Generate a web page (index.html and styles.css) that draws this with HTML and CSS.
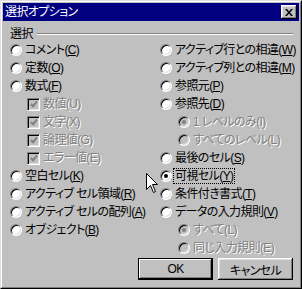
FILE: index.html
```html
<!DOCTYPE html>
<html lang="ja">
  <head>
    <meta charset="UTF-8" />
    <title>選択オプション</title>
    <link rel="stylesheet" href="styles.css">
  </head>
  <body>
    <div class="window">
      <div class="frame">
        <!-- Title bar -->
        <div class="titlebar">
          <span class="title">選択オプション</span>
          <button class="close">
            <svg width="8" height="7" viewBox="0 0 8 7">
              <path d="M0 0h2l2 2.5L6 0h2L5 3.5 8 7H6L4 4.5 2 7H0l3-3.5z" fill="#000" />
            </svg>
          </button>
        </div>

        <!-- Dialog body -->
        <div class="content">
          <div class="group-head">
            <span class="group-label">選択</span>
            <span class="rule"></span>
          </div>

          <div class="options">
            <div class="col">
              <div class="row"><span class="radio"></span><span class="label">コメント(<u>C</u>)</span></div>
              <div class="row"><span class="radio"></span><span class="label">定数(<u>O</u>)</span></div>
              <div class="row"><span class="radio"></span><span class="label">数式(<u>F</u>)</span></div>
              <div class="row sub"><span class="check"></span><span class="label off">数値(U)</span></div>
              <div class="row sub"><span class="check"></span><span class="label off">文字(X)</span></div>
              <div class="row sub"><span class="check"></span><span class="label off">論理値(G)</span></div>
              <div class="row sub"><span class="check"></span><span class="label off">エラー値(E)</span></div>
              <div class="row"><span class="radio"></span><span class="label">空白セル(<u>K</u>)</span></div>
              <div class="row"><span class="radio"></span><span class="label">アクティブ セル領域(<u>R</u>)</span></div>
              <div class="row"><span class="radio"></span><span class="label">アクティブ セルの配列(<u>A</u>)</span></div>
              <div class="row"><span class="radio"></span><span class="label">オブジェクト(<u>B</u>)</span></div>
            </div>
            <div class="col">
              <div class="row"><span class="radio"></span><span class="label">アクティブ行との相違(<u>W</u>)</span></div>
              <div class="row"><span class="radio"></span><span class="label">アクティブ列との相違(<u>M</u>)</span></div>
              <div class="row"><span class="radio"></span><span class="label">参照元(<u>P</u>)</span></div>
              <div class="row"><span class="radio"></span><span class="label">参照先(<u>D</u>)</span></div>
              <div class="row sub"><span class="radio disabled on"></span><span class="label off">1 レベルのみ(I)</span></div>
              <div class="row sub"><span class="radio disabled"></span><span class="label off">すべてのレベル(L)</span></div>
              <div class="row"><span class="radio"></span><span class="label">最後のセル(<u>S</u>)</span></div>
              <div class="row"><span class="radio on"></span><span class="label focus">可視セル(<u>Y</u>)</span></div>
              <div class="row"><span class="radio"></span><span class="label">条件付き書式(<u>T</u>)</span></div>
              <div class="row"><span class="radio"></span><span class="label">データの入力規則(<u>V</u>)</span></div>
              <div class="row sub"><span class="radio disabled on"></span><span class="label off">すべて(L)</span></div>
              <div class="row sub"><span class="radio disabled"></span><span class="label off">同じ入力規則(E)</span></div>
            </div>
          </div>

          <div class="buttons">
            <button class="btn default">OK</button>
            <button class="btn">キャンセル</button>
          </div>
        </div>
      </div>

      <!-- Mouse pointer -->
      <svg class="cursor" width="12" height="20" viewBox="0 0 12 20">
        <path d="M0.5 0.5V16.5L4.5 12.5L7.5 19.5L9.5 18.5L6.5 11.5H11.5Z" fill="#fff" stroke="#000" stroke-width="1" />
      </svg>
    </div>
  </body>
</html>
```

FILE: styles.css
```css
body {
  margin: 0;
  padding: 0;
  background: #c0c0c0;
  font-family: "Liberation Sans", "Noto Sans CJK JP", sans-serif;
  font-size: 12px;
  font-feature-settings: "palt";
  letter-spacing: -0.6px;
  color: #000;
}

/* Window frame */
.window {
  position: relative;
  width: 302px;
  height: 289px;
  box-sizing: border-box;
  border: 1px solid;
  border-color: #dfdfdf #000 #000 #dfdfdf;
  background: #c0c0c0;
}

.frame {
  height: 100%;
  box-sizing: border-box;
  border: 1px solid;
  border-color: #fff #808080 #808080 #fff;
  padding: 1px;
}

/* Title bar */
.titlebar {
  height: 18px;
  background: #000080;
  display: flex;
  align-items: center;
  justify-content: space-between;
  padding: 0 2px 0 2px;
}

.title {
  color: #fff;
  line-height: 18px;
}

.close {
  width: 16px;
  height: 14px;
  padding: 0;
  border: none;
  background: #c0c0c0;
  display: flex;
  align-items: center;
  justify-content: center;
  box-shadow: inset -1px -1px #000, inset 1px 1px #fff, inset -2px -2px #808080, inset 2px 2px #dfdfdf;
}

/* Body */
.content {
  padding: 6px 6px 0 7px;
}

.group-head {
  display: flex;
  align-items: center;
  height: 14px;
}

.group-label {
  line-height: 14px;
}

.rule {
  flex: 1;
  height: 0;
  margin-left: 4px;
  border-top: 1px solid #808080;
  border-bottom: 1px solid #fff;
}

.options {
  display: grid;
  grid-template-columns: 150px 1fr;
}

.row {
  height: 18px;
  display: flex;
  align-items: center;
}

.row.sub {
  padding-left: 17px;
}

.col + .col .row.sub {
  padding-left: 18px;
}

.label {
  margin-left: 1px;
  padding: 1px 1px;
  border: 1px solid transparent;
  line-height: 12px;
  white-space: nowrap;
}

.label.focus {
  border: 1px dotted #000;
}

.label.off {
  color: #808080;
  text-shadow: 1px 1px 0 #fff;
}

/* Radio buttons */
.radio {
  position: relative;
  width: 12px;
  height: 12px;
  box-sizing: border-box;
  border-radius: 50%;
  border: 1px solid;
  border-color: #808080 #fff #fff #808080;
  background: #fff;
  box-shadow: inset 1px 1px 0 #000, inset -1px -1px 0 #dfdfdf;
  flex: none;
}

.radio.disabled {
  background: #c0c0c0;
}

.radio.on::after {
  content: "";
  position: absolute;
  left: 3px;
  top: 3px;
  width: 4px;
  height: 4px;
  border-radius: 50%;
  background: #000;
}

.radio.disabled.on::after {
  background: #808080;
}

/* Disabled, checked check boxes */
.check {
  position: relative;
  width: 13px;
  height: 13px;
  box-sizing: border-box;
  border: 1px solid;
  border-color: #808080 #fff #fff #808080;
  background: #c0c0c0;
  box-shadow: inset 1px 1px 0 #000, inset -1px -1px 0 #dfdfdf;
  flex: none;
}

.check::after {
  content: "";
  position: absolute;
  left: 4px;
  top: 1px;
  width: 2px;
  height: 5px;
  border: solid #808080;
  border-width: 0 2px 2px 0;
  transform: rotate(40deg);
}

/* Buttons */
.buttons {
  display: flex;
  justify-content: flex-end;
  gap: 5px;
  margin-top: 1px;
}

.btn {
  width: 75px;
  height: 22px;
  padding: 0;
  border: none;
  background: #c0c0c0;
  font-family: inherit;
  font-size: 12px;
  font-feature-settings: "palt";
  letter-spacing: -0.6px;
  color: #000;
  box-shadow: inset -1px -1px #000, inset 1px 1px #fff, inset -2px -2px #808080, inset 2px 2px #dfdfdf;
}

.btn.default {
  box-shadow: inset 0 0 0 1px #000, inset -2px -2px #000, inset 2px 2px #fff, inset -3px -3px #808080;
}

/* Mouse pointer over the dialog */
.cursor {
  position: absolute;
  left: 145px;
  top: 172px;
}
```
